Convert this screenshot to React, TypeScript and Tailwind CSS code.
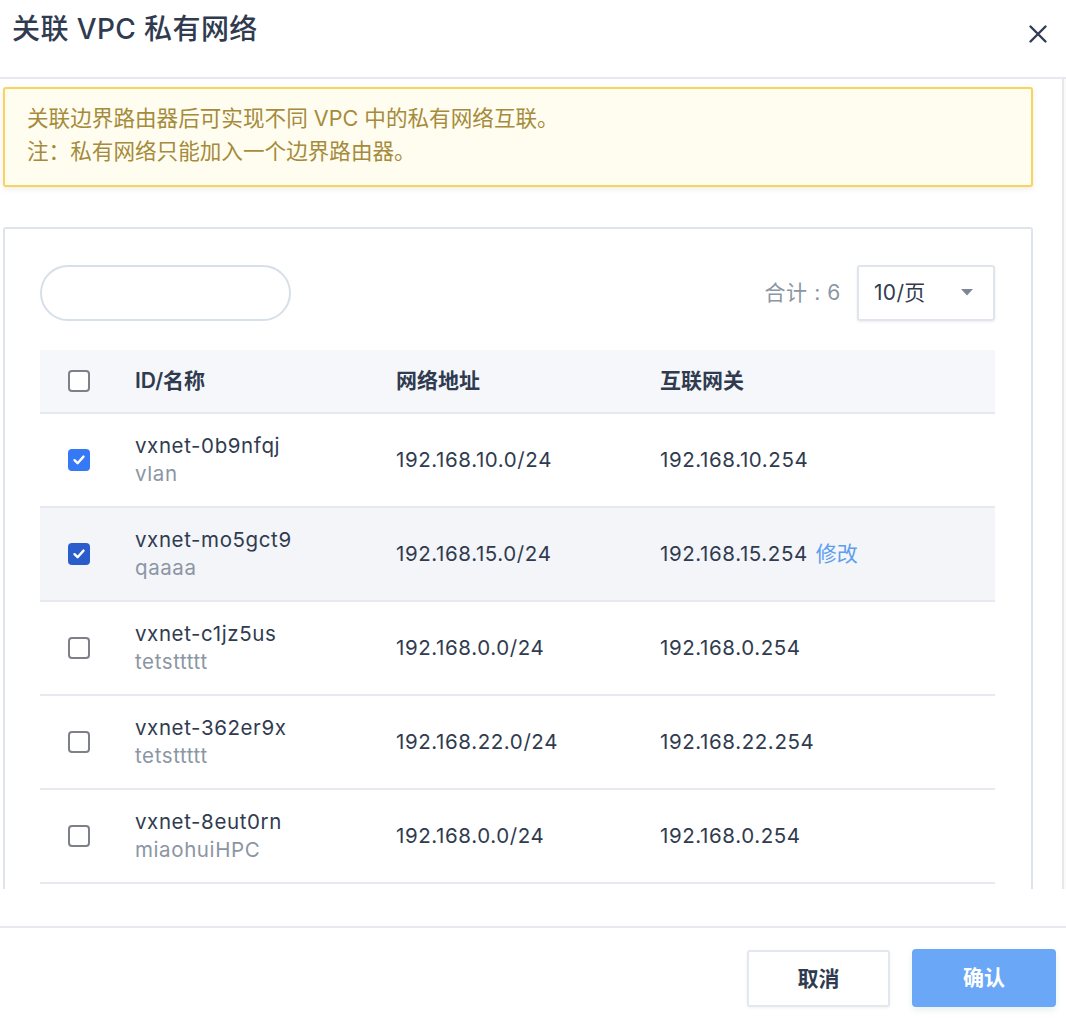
import React from 'react';

const rows = [
  { id: 'vxnet-0b9nfqj', name: 'vlan', cidr: '192.168.10.0/24', gw: '192.168.10.254', checked: true },
  { id: 'vxnet-mo5gct9', name: 'qaaaa', cidr: '192.168.15.0/24', gw: '192.168.15.254', checked: true, hover: true, edit: true },
  { id: 'vxnet-c1jz5us', name: 'tetsttttt', cidr: '192.168.0.0/24', gw: '192.168.0.254' },
  { id: 'vxnet-362er9x', name: 'tetsttttt', cidr: '192.168.22.0/24', gw: '192.168.22.254' },
  { id: 'vxnet-8eut0rn', name: 'miaohuiHPC', cidr: '192.168.0.0/24', gw: '192.168.0.254' },
];

const Checkbox = ({ checked, dark }: { checked?: boolean; dark?: boolean }) => {
  if (!checked) {
    return <span className="block w-[22px] h-[22px] rounded-[4px] border-2 border-[#7d8088] bg-white" />;
  }
  return (
    <span className={`flex items-center justify-center w-[22px] h-[22px] rounded-[4px] ${dark ? 'bg-[#2a5ccc]' : 'bg-[#3579f6]'}`}>
      <svg width="14" height="14" viewBox="0 0 14 14">
        <path d="M2.5 7.2 L5.6 10.2 L11.5 3.6" fill="none" stroke="white" strokeWidth="2.4" strokeLinecap="round" strokeLinejoin="round" />
      </svg>
    </span>
  );
};

export default function App() {
  return (
    <div
      className="w-[1066px] h-[1018px] bg-white flex flex-col overflow-hidden text-[#303b50]"
      style={{ fontFamily: 'Inter, "Noto Sans CJK SC", sans-serif' }}
    >
      {/* header */}
      <div className="h-[79px] shrink-0 flex items-start justify-between border-b-2 border-[#e6eaef] pl-[12px] pr-[18px]">
        <h1 className="text-[28px] font-medium leading-none mt-[15px] tracking-[0.4px]">关联 VPC 私有网络</h1>
        <button className="mt-[24px] text-[#2f3d55]">
          <svg width="20" height="20" viewBox="0 0 20 20">
            <path d="M2.5 2.5 L17.5 17.5 M17.5 2.5 L2.5 17.5" stroke="currentColor" strokeWidth="2.4" strokeLinecap="round" />
          </svg>
        </button>
      </div>

      {/* body */}
      <div className="h-[810px] shrink-0 flex">
        <div className="flex-1 overflow-hidden pl-[3px] pr-[29px] pt-[8px]">
          <div className="border-2 border-[#f8d45a] bg-[#fffdf0] rounded-[3px] shadow-[0_2px_6px_rgba(0,0,0,0.08)] h-[100px] pl-[22px] pt-[13px] text-[21.6px] leading-[33px] text-[#a58b3b]">
            <p>关联边界路由器后可实现不同 VPC 中的私有网络互联。</p>
            <p>注：私有网络只能加入一个边界路由器。</p>
          </div>

          <div className="mt-[40px] border-2 border-[#dfe4ec] rounded-[3px] pl-[35px] pr-[36px] pt-[36px] pb-[40px]">
            <div className="flex items-center justify-between">
              <input className="w-[251px] h-[56px] rounded-full border-2 border-[#d7dfe8] outline-none px-6 text-[20px]" />
              <div className="flex items-center gap-[16px]">
                <span className="text-[21px] tracking-[0.6px] text-[#8b96a4]">合计 : 6</span>
                <div className="w-[138px] h-[56px] border-2 border-[#dfe5ec] rounded-[3px] shadow-[0_1px_3px_rgba(0,0,0,0.08)] flex items-center justify-between pl-[15px] pr-[20px]">
                  <span className="text-[21px] tracking-[0.3px] text-[#303b50]">10/页</span>
                  <svg width="12" height="8" viewBox="0 0 12 8">
                    <path d="M0 0 L12 0 L6 6.5 Z" fill="#7d8794" />
                  </svg>
                </div>
              </div>
            </div>

            <div className="mt-[29px]">
              <div className="grid grid-cols-[95px_261px_264px_1fr] items-center h-[64px] bg-[#f5f7fa] border-b-2 border-[#e4e9ef] text-[21px] font-semibold">
                <div className="pl-[28px]"><Checkbox /></div>
                <div>ID/名称</div>
                <div>网络地址</div>
                <div>互联网关</div>
              </div>
              {rows.map((r) => (
                <div
                  key={r.id}
                  className={`grid grid-cols-[95px_261px_264px_1fr] items-center h-[94px] border-b-2 border-[#e6eaf0] text-[20.5px] tracking-[0.6px] ${r.hover ? 'bg-[#f3f5f9]' : 'bg-white'}`}
                >
                  <div className="pl-[28px]"><Checkbox checked={r.checked} dark={r.hover} /></div>
                  <div className="leading-[28px] -mt-[1px]">
                    <div>{r.id}</div>
                    <div className="text-[#8b95a3]">{r.name}</div>
                  </div>
                  <div>{r.cidr}</div>
                  <div className="flex items-center gap-[8px]">
                    <span>{r.gw}</span>
                    {r.edit && <span className="text-[#5d9df0] text-[21px] tracking-normal">修改</span>}
                  </div>
                </div>
              ))}
            </div>
          </div>
        </div>
        <div className="w-[4px] border-l-2 border-[#e6e8eb] bg-[#fafafa]" />
      </div>

      {/* footer */}
      <div className="mt-[37px] border-t-2 border-[#e6eaef] flex justify-end gap-[22px] pt-[22px] pr-[10px]">
        <button className="w-[143px] h-[57px] border-2 border-[#e3e8ef] rounded-[3px] bg-white text-[21px] font-semibold text-[#303b50] shadow-[0_1px_3px_rgba(0,0,0,0.06)]">
          取消
        </button>
        <button className="w-[144px] h-[58px] -mt-[1px] rounded-[4px] bg-[#6aa8f7] text-white text-[21px] font-semibold shadow-[0_3px_6px_rgba(80,160,120,0.15)]">
          确认
        </button>
      </div>
    </div>
  );
}
